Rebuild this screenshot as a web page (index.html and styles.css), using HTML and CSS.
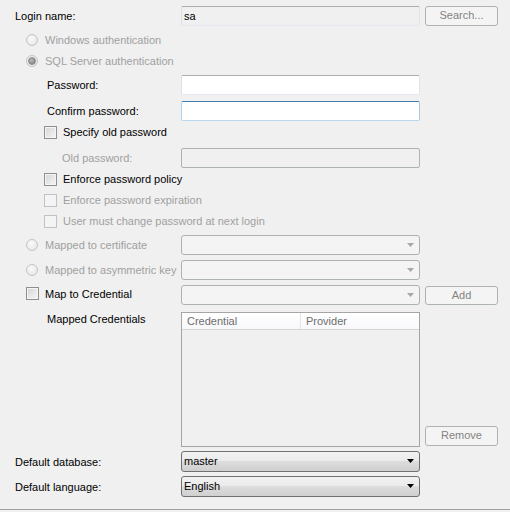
FILE: index.html
```html
<!DOCTYPE html>
<html lang="en">
<head>
  <meta charset="UTF-8">
  <title>Login Properties - General</title>
  <link rel="stylesheet" href="styles.css">
</head>
<body>
  <div class="page">
    <div class="row r-login">
      <div class="lbl">Login name:</div>
      <div class="field"><div class="textbox readonly">sa</div></div>
      <div class="side"><div class="btn">Search...</div></div>
    </div>

    <div class="row r-radio first">
      <div class="lbl ind1 off"><span class="radio"></span>Windows authentication</div>
    </div>
    <div class="row r-radio">
      <div class="lbl ind1 off"><span class="radio on"></span>SQL Server authentication</div>
    </div>

    <div class="row r-pass">
      <div class="lbl ind2">Password:</div>
      <div class="field"><div class="textbox"></div></div>
    </div>
    <div class="row r-confirm">
      <div class="lbl ind2">Confirm password:</div>
      <div class="field"><div class="textbox focus"></div></div>
    </div>

    <div class="row r-check">
      <div class="lbl ind3"><span class="check"></span>Specify old password</div>
    </div>
    <div class="row r-old">
      <div class="lbl ind4 off">Old password:</div>
      <div class="field"><div class="textbox disabled"></div></div>
    </div>

    <div class="row r-check">
      <div class="lbl ind3"><span class="check"></span>Enforce password policy</div>
    </div>
    <div class="row r-check">
      <div class="lbl ind3 off"><span class="check dis"></span>Enforce password expiration</div>
    </div>
    <div class="row r-check">
      <div class="lbl ind3 off wide"><span class="check dis"></span>User must change password at next login</div>
    </div>

    <div class="row r-cert">
      <div class="lbl ind1 off"><span class="radio"></span>Mapped to certificate</div>
      <div class="field"><div class="combo disabled"><span></span><svg width="7" height="4"><path d="M0 0h7L3.5 4z" fill="#a7a7a7"/></svg></div></div>
    </div>
    <div class="row r-asym">
      <div class="lbl ind1 off"><span class="radio"></span>Mapped to asymmetric key</div>
      <div class="field"><div class="combo disabled"><span></span><svg width="7" height="4"><path d="M0 0h7L3.5 4z" fill="#a7a7a7"/></svg></div></div>
    </div>
    <div class="row r-cred">
      <div class="lbl ind1 raise"><span class="check"></span>Map to Credential</div>
      <div class="field"><div class="combo disabled"><span></span><svg width="7" height="4"><path d="M0 0h7L3.5 4z" fill="#a7a7a7"/></svg></div></div>
      <div class="side"><div class="btn add">Add</div></div>
    </div>

    <div class="row r-list">
      <div class="lbl ind2 top">Mapped Credentials</div>
      <div class="field">
        <div class="listview">
          <div class="lv-head">
            <div class="col c1">Credential</div>
            <div class="col c2">Provider</div>
          </div>
        </div>
      </div>
      <div class="side bottom"><div class="btn">Remove</div></div>
    </div>

    <div class="row r-db">
      <div class="lbl">Default database:</div>
      <div class="field"><div class="combo"><span>master</span><svg width="7" height="4"><path d="M0 0h7L3.5 4z" fill="#000"/></svg></div></div>
    </div>
    <div class="row r-lang">
      <div class="lbl">Default language:</div>
      <div class="field"><div class="combo"><span>English</span><svg width="7" height="4"><path d="M0 0h7L3.5 4z" fill="#000"/></svg></div></div>
    </div>
  </div>
</body>
</html>
```

FILE: styles.css
```css
* {
  box-sizing: border-box;
}

body {
  margin: 0;
  background-color: #f0f0f0;
  font-family: "Liberation Sans", Arial, sans-serif;
  font-size: 11px;
  color: #000;
}

.page {
  display: flex;
  flex-direction: column;
  height: 510px;
  padding-top: 6px;
  border-bottom: 1px solid #a0a0a0;
}

.row {
  display: flex;
  align-items: center;
  height: 20px;
}

/* vertical rhythm of the dialog rows */
.r-radio { margin-top: 1px; }
.r-radio.first { margin-top: 4px; }
.r-pass { margin-top: 4px; }
.r-confirm { margin-top: 6px; }
.r-check { margin-top: 1px; }
.r-old { margin-top: 6px; }
.r-cert { margin-top: 4px; }
.r-asym { margin-top: 5px; }
.r-cred { margin-top: 5px; }
.r-list { margin-top: 7px; height: 135px; align-items: stretch; }
.r-db { margin-top: 4px; height: 21px; }
.r-lang { margin-top: 4px; height: 21px; }

.lbl {
  width: 181px;
  flex-shrink: 0;
  padding-left: 15px;
  display: flex;
  align-items: center;
  white-space: nowrap;
}

.lbl.wide { width: auto; }
.lbl.top { align-items: flex-start; padding-top: 1px; }
.lbl.off { color: #a0a0a0; }
.lbl.raise { padding-bottom: 3px; }

.ind1 { padding-left: 26px; }
.ind2 { padding-left: 47px; }
.ind3 { padding-left: 44px; }
.ind4 { padding-left: 62px; }

.field {
  width: 239px;
  height: 100%;
  flex-shrink: 0;
}

.side {
  width: 73px;
  margin-left: 5px;
  height: 100%;
  display: flex;
  flex-direction: column;
}

.side.bottom { justify-content: flex-end; padding-bottom: 1px; }

/* text boxes */
.textbox {
  height: 20px;
  background-color: #fff;
  border: 1px solid;
  border-color: #abadb3 #e2e3ea #e3e9ef #dbdfe6;
  border-radius: 2px;
  padding: 2px 2px 0;
  line-height: 14px;
}

.textbox.readonly { background-color: #f0f0f0; }

.textbox.focus {
  border-color: #3d7bad #a4c9e3 #b7d9ed #b5cfe7;
}

.textbox.disabled {
  background-color: #f0f0f0;
  border-color: #adb2b5;
}

/* buttons */
.btn {
  height: 20px;
  border: 1px solid #adb2b5;
  border-radius: 3px;
  background-color: #f4f4f4;
  color: #838383;
  text-align: center;
  line-height: 17px;
}

.btn.add { margin-top: 1px; }

/* combo boxes */
.combo {
  height: 20px;
  border: 1px solid #adb2b5;
  border-radius: 3px;
  background-color: #f4f4f4;
  display: flex;
  align-items: center;
  justify-content: space-between;
  padding: 0 5px 0 2px;
}

.r-db .combo,
.r-lang .combo {
  height: 21px;
  border-color: #707070;
  background: linear-gradient(#f2f2f2 0%, #ebebeb 45%, #dddddd 50%, #cfcfcf 100%);
  padding-bottom: 2px;
}

.combo svg { display: block; }

/* radio buttons */
.radio {
  width: 12px;
  height: 12px;
  margin-right: 7px;
  border: 1px solid #c4c4c4;
  border-radius: 50%;
  background: radial-gradient(circle at 40% 35%, #fafafa, #e2e2e2);
  display: flex;
  align-items: center;
  justify-content: center;
  flex-shrink: 0;
}

.radio.on::after {
  content: "";
  width: 6px;
  height: 6px;
  border-radius: 50%;
  background: radial-gradient(circle at 40% 35%, #b8b8b8, #7a7a7a);
  border: 1px solid #8c8c8c;
}

/* check boxes */
.check {
  width: 13px;
  height: 13px;
  margin-right: 6px;
  border: 1px solid #8e8f8f;
  background: linear-gradient(135deg, #d4d4d4, #f7f7f7);
  box-shadow: inset 0 0 0 1px #f4f4f4;
  flex-shrink: 0;
}

.check.dis {
  border-color: #c2c2c2;
  background: #f4f4f4;
  box-shadow: none;
}

/* list view */
.listview {
  height: 135px;
  border: 1px solid #a5a5a5;
  background-color: #f0f0f0;
}

.lv-head {
  display: flex;
  height: 17px;
  background: linear-gradient(#ffffff, #f7f8fa);
  border-bottom: 1px solid #d5d5d5;
  color: #6d6d6d;
}

.col {
  line-height: 16px;
  padding-left: 5px;
}

.c1 {
  width: 119px;
  border-right: 1px solid #e3e4e6;
}

.c2 { flex: 1; }
```
